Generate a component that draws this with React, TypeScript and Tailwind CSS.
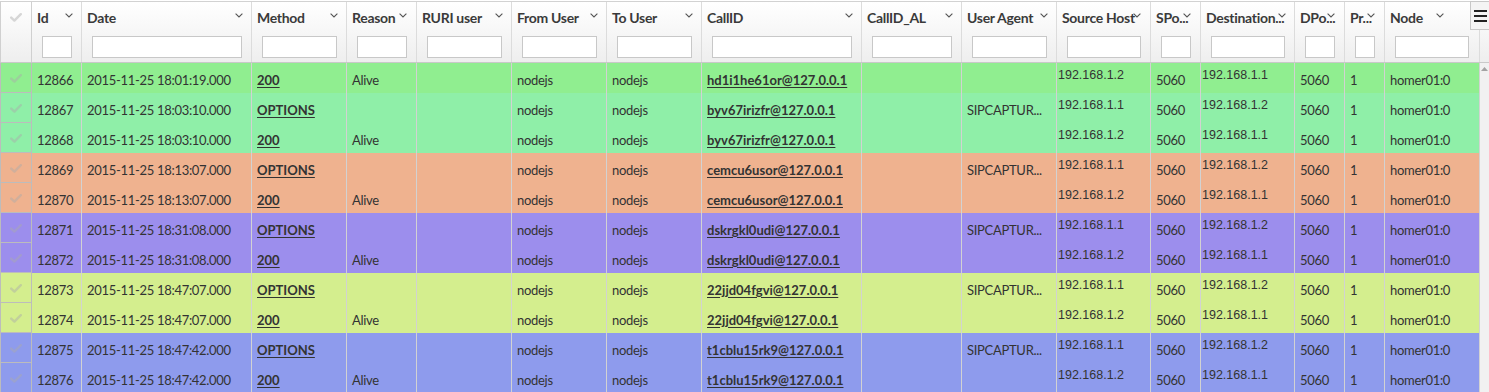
import React from 'react';

type Col = { title: string; w: string; inW: string; chev: string; kind: 'text' | 'link' | 'ip' };

const cols: Col[] = [
  { title: 'Id', w: 'w-[50px]', inW: 'w-[30px]', chev: 'right-[8px]', kind: 'text' },
  { title: 'Date', w: 'w-[170px]', inW: 'w-[150px]', chev: 'right-[8px]', kind: 'text' },
  { title: 'Method', w: 'w-[95px]', inW: 'w-[75px]', chev: 'right-[8px]', kind: 'link' },
  { title: 'Reason', w: 'w-[70px]', inW: 'w-[50px]', chev: 'right-[9px]', kind: 'text' },
  { title: 'RURI user', w: 'w-[95px]', inW: 'w-[75px]', chev: 'right-[8px]', kind: 'text' },
  { title: 'From User', w: 'w-[95px]', inW: 'w-[75px]', chev: 'right-[8px]', kind: 'text' },
  { title: 'To User', w: 'w-[95px]', inW: 'w-[75px]', chev: 'right-[8px]', kind: 'text' },
  { title: 'CallID', w: 'w-[160px]', inW: 'w-[140px]', chev: 'right-[8px]', kind: 'link' },
  { title: 'CallID_AL', w: 'w-[100px]', inW: 'w-[80px]', chev: 'right-[8px]', kind: 'text' },
  { title: 'User Agent', w: 'w-[95px]', inW: 'w-[75px]', chev: 'right-[8px]', kind: 'text' },
  { title: 'Source Host', w: 'w-[94px]', inW: 'w-[74px]', chev: 'right-[9px]', kind: 'ip' },
  { title: 'SPo...', w: 'w-[50px]', inW: 'w-[30px]', chev: 'right-[9px]', kind: 'text' },
  { title: 'Destination...', w: 'w-[94px]', inW: 'w-[74px]', chev: 'right-[8px]', kind: 'ip' },
  { title: 'DPo...', w: 'w-[50px]', inW: 'w-[30px]', chev: 'right-[9px]', kind: 'text' },
  { title: 'Pr...', w: 'w-[40px]', inW: 'w-[20px]', chev: 'right-[9px]', kind: 'text' },
  { title: 'Node', w: 'w-[95px]', inW: 'w-[74px]', chev: 'right-[35px]', kind: 'text' },
];

type Row = { bg: string; v: string[] };

const mk = (
  id: string,
  time: string,
  method: string,
  callid: string,
  src: string,
  dst: string,
): string[] => {
  const isOpt = method === 'OPTIONS';
  return [
    id,
    `2015-11-25 ${time}`,
    method,
    isOpt ? '' : 'Alive',
    '',
    'nodejs',
    'nodejs',
    `${callid}@127.0.0.1`,
    '',
    isOpt ? 'SIPCAPTUR...' : '',
    src,
    '5060',
    dst,
    '5060',
    '1',
    'homer01:0',
  ];
};

const rows: Row[] = [
  { bg: 'bg-[#90ee90]', v: mk('12866', '18:01:19.000', '200', 'hd1i1he61or', '192.168.1.2', '192.168.1.1') },
  { bg: 'bg-[#8fefa8]', v: mk('12867', '18:03:10.000', 'OPTIONS', 'byv67irizfr', '192.168.1.1', '192.168.1.2') },
  { bg: 'bg-[#8fefa8]', v: mk('12868', '18:03:10.000', '200', 'byv67irizfr', '192.168.1.2', '192.168.1.1') },
  { bg: 'bg-[#efb28f]', v: mk('12869', '18:13:07.000', 'OPTIONS', 'cemcu6usor', '192.168.1.1', '192.168.1.2') },
  { bg: 'bg-[#efb28f]', v: mk('12870', '18:13:07.000', '200', 'cemcu6usor', '192.168.1.2', '192.168.1.1') },
  { bg: 'bg-[#9c8eed]', v: mk('12871', '18:31:08.000', 'OPTIONS', 'dskrgkl0udi', '192.168.1.1', '192.168.1.2') },
  { bg: 'bg-[#9c8eed]', v: mk('12872', '18:31:08.000', '200', 'dskrgkl0udi', '192.168.1.2', '192.168.1.1') },
  { bg: 'bg-[#d4ee8e]', v: mk('12873', '18:47:07.000', 'OPTIONS', '22jjd04fgvi', '192.168.1.1', '192.168.1.2') },
  { bg: 'bg-[#d4ee8e]', v: mk('12874', '18:47:07.000', '200', '22jjd04fgvi', '192.168.1.2', '192.168.1.1') },
  { bg: 'bg-[#8e9bed]', v: mk('12875', '18:47:42.000', 'OPTIONS', 't1cblu15rk9', '192.168.1.1', '192.168.1.2') },
  { bg: 'bg-[#8e9bed]', v: mk('12876', '18:47:42.000', '200', 't1cblu15rk9', '192.168.1.2', '192.168.1.1') },
];

function Check({ color }: { color: string }) {
  return (
    <svg width="12" height="9" viewBox="0 0 12 9" className="block">
      <path d="M1.2 4.6 L4.4 7.6 L10.8 1.2" fill="none" stroke={color} strokeWidth="2.4" strokeLinecap="round" strokeLinejoin="round" />
    </svg>
  );
}

function Chevron({ pos }: { pos: string }) {
  return (
    <svg width="8" height="5" viewBox="0 0 8 5" className={`absolute top-[11px] ${pos}`}>
      <path d="M0.6 0.6 L4 4 L7.4 0.6" fill="none" stroke="#555" strokeWidth="1.1" />
    </svg>
  );
}

export default function App() {
  return (
    <div className="w-[1489px] h-[392px] overflow-hidden bg-white pt-px font-[family-name:Lato,sans-serif] text-[#333]">
      <div className="border-t border-[#d2d2d2]">
        {/* header */}
        <div className="relative flex h-[61px] border-b border-[#c9c9c9] bg-linear-to-b from-white to-[#eeeeee]">
          <div className="w-[32px] shrink-0 border-l border-r border-[#d0d0d0] flex justify-center pt-[11px]">
            <Check color="#d6d6d6" />
          </div>
          {cols.map((c) => (
            <div key={c.title} className={`${c.w} shrink-0 relative border-r border-[#dcdcdc]`}>
              <div className="h-[30px] flex items-center pl-[5px] text-[14px] font-bold tracking-[-0.3px] text-[#3a3a3a] whitespace-nowrap">
                <span>{c.title}</span>
              </div>
              <Chevron pos={c.chev} />
              <input
                readOnly
                className={`${c.inW} block mt-[4px] ml-[10px] h-[22px] border border-[#c8c8c8] bg-white outline-none`}
              />
            </div>
          ))}
          <div className="flex-1" />
          <div className="absolute right-0 top-[-1px] w-[19px] h-[29px] border border-r-0 border-[#c8c8c8] bg-[#f4f4f4] flex flex-col items-center justify-center gap-[3px]">
            <div className="w-[13px] h-[2px] bg-[#222]" />
            <div className="w-[13px] h-[2px] bg-[#222]" />
            <div className="w-[13px] h-[2px] bg-[#222]" />
          </div>
        </div>
        {/* body */}
        <div className="flex">
          <div className="w-[1480px] shrink-0">
            {rows.map((r) => (
              <div key={r.v[0]} className={`flex h-[30px] ${r.bg}`}>
                <div className="w-[32px] shrink-0 border-l border-r border-b border-[#bcbcbc] flex items-center justify-center pt-[2px]">
                  <Check color="rgba(170,170,170,0.45)" />
                </div>
                {cols.map((c, i) => {
                  const val = r.v[i];
                  if (c.kind === 'ip') {
                    return (
                      <div key={i} className={`${c.w} shrink-0 border-r border-[#d2d2d2] pl-px pt-[5px] text-[12.5px] leading-[14px] font-[family-name:'Liberation_Sans',Arial,sans-serif] text-[#333]`}>
                        {val}
                      </div>
                    );
                  }
                  return (
                    <div key={i} className={`${c.w} shrink-0 border-r border-[#d2d2d2] flex items-center pl-[5px] pr-[2px] pt-[5px] text-[13px] whitespace-nowrap overflow-hidden`}>
                      {c.kind === 'link' ? (
                        <span className="font-bold underline underline-offset-2">{val}</span>
                      ) : (
                        <span className="tracking-[-0.3px]">{val}</span>
                      )}
                    </div>
                  );
                })}
              </div>
            ))}
          </div>
          <div className="flex-1 bg-[#f1f1f1] flex justify-center pt-[4px]">
            <svg width="7" height="4" viewBox="0 0 7 4">
              <path d="M0 4 L3.5 0 L7 4 Z" fill="#a3a3a3" />
            </svg>
          </div>
        </div>
      </div>
    </div>
  );
}
